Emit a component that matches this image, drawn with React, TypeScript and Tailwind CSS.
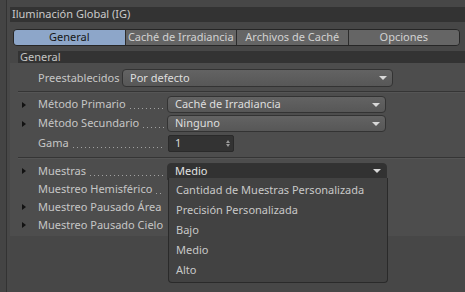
import React from 'react';

const font = { fontFamily: '"Noto Sans", "Open Sans", sans-serif' };

const Arrow: React.FC = () => (
  <span className="w-0 h-0 border-x-[4px] border-x-transparent border-t-[4px] border-t-[#d8d8d8]" />
);

const Expand: React.FC<{ show?: boolean }> = ({ show = true }) => (
  <div className="w-[28px] flex pl-[12px]">
    {show && <span className="w-0 h-0 border-y-[3px] border-y-transparent border-l-[4px] border-l-[#121212]" />}
  </div>
);

// leader dots drawn as a repeating 1px gradient
const Label: React.FC<{ text: string; dots?: boolean }> = ({ text, dots = true }) => (
  <div className="w-[129px] flex items-center text-[11px] text-[#c6c6c6] whitespace-nowrap">
    <span>{text}</span>
    {dots && (
      <span className="flex-1 h-[1px] mt-[8px] ml-[4px] mr-[3px] bg-[linear-gradient(to_right,#a2a2a2_1px,transparent_1px)] bg-[length:4px_1px]" />
    )}
  </div>
);

const Dropdown: React.FC<{ value: string; width: string; open?: boolean }> = ({ value, width, open }) => (
  <div
    className={`${width} h-[17px] flex items-center justify-between pl-[7px] pr-[5px] rounded-[4px] border border-[#333] text-[11px] ${
      open ? 'bg-[#323232] text-[#e2e2e2] rounded-b-none' : 'bg-gradient-to-b from-[#636363] to-[#575757] text-[#dedede]'
    }`}
  >
    <span>{value}</span>
    <Arrow />
  </div>
);

const Row: React.FC<{ children: React.ReactNode; h?: string }> = ({ children, h = 'h-[19px]' }) => (
  <div className={`${h} flex items-center`}>{children}</div>
);

const Separator: React.FC = () => (
  <>
    <div className="ml-[8px] h-[1px] bg-[#353535]" />
    <div className="ml-[8px] h-[1px] bg-[#555]" />
  </>
);

const tabs = ['General', 'Caché de Irradiancia', 'Archivos de Caché', 'Opciones'];
const options = ['Cantidad de Muestras Personalizada', 'Precisión Personalizada', 'Bajo', 'Medio', 'Alto'];

export default function App() {
  return (
    <div className="w-[465px] h-[292px] bg-[#474747] flex overflow-hidden" style={font}>
      <div className="w-[10px] flex">
        <div className="w-[6px] bg-[#444]" />
        <div className="w-[1px] bg-[#333]" />
        <div className="flex-1 bg-[#484848]" />
      </div>
      <div className="flex-1 flex flex-col pt-[7px]">
        <div className="h-[15px] bg-[#333] flex items-center pl-[2px] text-[11px] text-[#cacaca]">
          Iluminación Global (IG)
        </div>
        <div className="mt-[7px] ml-[3px] w-[447px] h-[17px] flex rounded-[4px] border border-[#262626] overflow-hidden">
          {tabs.map((t, i) => (
            <div
              key={t}
              className={`flex-1 flex items-center justify-center text-[11px] ${i > 0 ? 'border-l border-[#2c2c2c]' : ''} ${
                i === 0 ? 'bg-[#8da6c9] text-[#161616]' : 'bg-[#656565] text-[#d2d2d2]'
              }`}
            >
              {t}
            </div>
          ))}
        </div>
        <div className="mt-[5px] ml-[8px] h-[12px] bg-[#333] flex items-center pl-[2px] text-[11px] text-[#c4c4c4]">
          General
        </div>
        <div className="bg-[#4d4d4d] h-[173px] relative flex flex-col">
          <div className="h-[6px]" />
          <div className="h-[18px] flex items-center">
            <div className="w-[28px]" />
            <div className="w-[84px] text-[11px] text-[#c6c6c6]">Preestablecidos</div>
            <Dropdown value="Por defecto" width="w-[271px] h-[18px]" />
          </div>
          <div className="h-[4px]" />
          <Separator />
          <div className="h-[2px]" />
          <Row>
            <Expand />
            <Label text="Método Primario" />
            <Dropdown value="Caché de Irradiancia" width="w-[219px]" />
          </Row>
          <Row>
            <Expand />
            <Label text="Método Secundario" />
            <Dropdown value="Ninguno" width="w-[219px]" />
          </Row>
          <Row h="h-[20px]">
            <Expand show={false} />
            <Label text="Gama" />
            <div className="ml-[1px] w-[66px] h-[17px] bg-[#333] border border-[#2a2a2a] rounded-[2px] flex items-center justify-between pl-[6px] pr-[3px] text-[11px] text-[#dcdcdc]">
              <span>1</span>
              <span className="flex flex-col gap-[1px]">
                <span className="w-0 h-0 border-x-[2.5px] border-x-transparent border-b-[3px] border-b-[#9a9a9a]" />
                <span className="w-0 h-0 border-x-[2.5px] border-x-transparent border-t-[3px] border-t-[#9a9a9a]" />
              </span>
            </div>
          </Row>
          <div className="h-[4px]" />
          <Separator />
          <div className="h-[3px]" />
          <Row h="h-[18px]">
            <Expand />
            <Label text="Muestras" />
            <Dropdown value="Medio" width="w-[220px] h-[16px]" open />
          </Row>
          <Row h="h-[18px]">
            <Expand show={false} />
            <Label text="Muestreo Hemisférico" />
          </Row>
          <Row h="h-[18px]">
            <Expand />
            <Label text="Muestreo Pausado Área" dots={false} />
          </Row>
          <Row h="h-[18px]">
            <Expand />
            <Label text="Muestreo Pausado Cielo" dots={false} />
          </Row>
          <div className="absolute left-[158px] top-[115px] w-[220px] h-[105px] bg-[#424242] border border-[#2a2a2a] border-t-0 rounded-b-[4px] z-10 flex flex-col pt-[2px]">
            {options.map(o => (
              <div key={o} className="h-[20px] flex items-center pl-[7px] text-[11px] text-[#c8c8c8]">
                {o}
              </div>
            ))}
          </div>
        </div>
      </div>
    </div>
  );
}
